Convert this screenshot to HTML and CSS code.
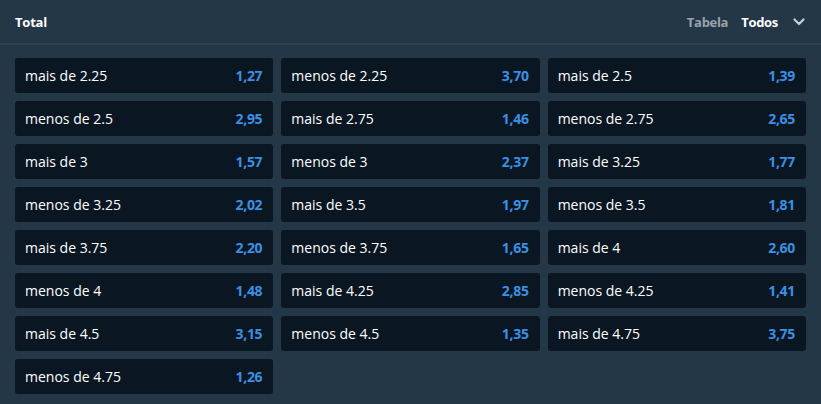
FILE: index.html
```html
<!DOCTYPE html>
<html>
<head>
<meta charset="utf-8">
<link rel="stylesheet" href="styles.css">
</head>
<body>
<div class="panel">
  <div class="header">
    <div class="title">Total</div>
    <div class="controls">
      <span class="tab">Tabela</span>
      <span class="tab active">Todos</span>
      <svg class="chev" width="12" height="8" viewBox="0 0 12 8"><path d="M1.5 1.5 L6 6 L10.5 1.5" fill="none" stroke="#c9ced3" stroke-width="2.2" stroke-linecap="round" stroke-linejoin="round"/></svg>
    </div>
  </div>
  <div class="grid">
    <div class="cell"><span>mais de 2.25</span><b>1,27</b></div>
    <div class="cell"><span>menos de 2.25</span><b>3,70</b></div>
    <div class="cell"><span>mais de 2.5</span><b>1,39</b></div>
    <div class="cell"><span>menos de 2.5</span><b>2,95</b></div>
    <div class="cell"><span>mais de 2.75</span><b>1,46</b></div>
    <div class="cell"><span>menos de 2.75</span><b>2,65</b></div>
    <div class="cell"><span>mais de 3</span><b>1,57</b></div>
    <div class="cell"><span>menos de 3</span><b>2,37</b></div>
    <div class="cell"><span>mais de 3.25</span><b>1,77</b></div>
    <div class="cell"><span>menos de 3.25</span><b>2,02</b></div>
    <div class="cell"><span>mais de 3.5</span><b>1,97</b></div>
    <div class="cell"><span>menos de 3.5</span><b>1,81</b></div>
    <div class="cell"><span>mais de 3.75</span><b>2,20</b></div>
    <div class="cell"><span>menos de 3.75</span><b>1,65</b></div>
    <div class="cell"><span>mais de 4</span><b>2,60</b></div>
    <div class="cell"><span>menos de 4</span><b>1,48</b></div>
    <div class="cell"><span>mais de 4.25</span><b>2,85</b></div>
    <div class="cell"><span>menos de 4.25</span><b>1,41</b></div>
    <div class="cell"><span>mais de 4.5</span><b>3,15</b></div>
    <div class="cell"><span>menos de 4.5</span><b>1,35</b></div>
    <div class="cell"><span>mais de 4.75</span><b>3,75</b></div>
    <div class="cell"><span>menos de 4.75</span><b>1,26</b></div>
  </div>
</div>
</body>
</html>
```
FILE: styles.css
```css
html, body {
  margin: 0;
  padding: 0;
  background: #243746;
}
body {
  font-family: "Open Sans", sans-serif;
  color: #ffffff;
  width: 821px;
  height: 404px;
  overflow: hidden;
}
.panel {
  background: #243746;
}
.header {
  height: 43px;
  border-bottom: 2px solid #2f4251;
  display: flex;
  align-items: center;
  justify-content: space-between;
  padding: 0 15px;
}
.title {
  font-weight: 700;
  font-size: 13px;
  letter-spacing: -0.2px;
}
.controls {
  display: flex;
  align-items: center;
  gap: 13px;
  font-size: 13px;
  letter-spacing: -0.3px;
}
.tab {
  color: #9aa3ab;
  font-weight: 700;
}
.tab.active {
  color: #ffffff;
}
.chev {
  margin-left: 2px;
  margin-right: 1px;
}
.grid {
  display: grid;
  grid-template-columns: repeat(3, 1fr);
  gap: 8px;
  padding: 13px 15px 10px;
}
.cell {
  background: #0a1723;
  border-radius: 3px;
  height: 35px;
  display: flex;
  align-items: center;
  justify-content: space-between;
  padding: 0 11px 0 10px;
  font-size: 14px;
}
.cell span {
  color: #ffffff;
}
.cell b {
  color: #3d8fe2;
  font-weight: 700;
  letter-spacing: -0.3px;
}
```
